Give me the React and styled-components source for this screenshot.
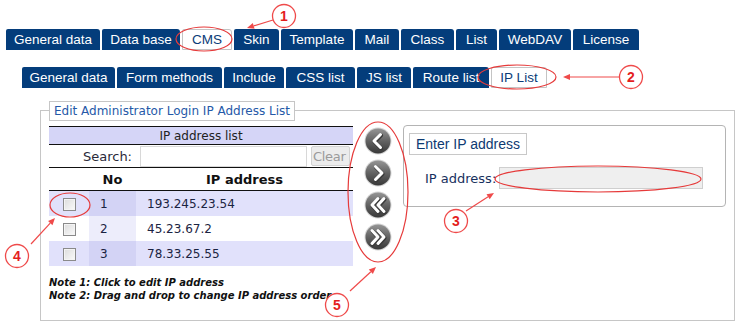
import React from "react";
import styled, { createGlobalStyle } from "styled-components";

const GlobalStyle = createGlobalStyle`
  html, body {
    margin: 0;
    padding: 0;
    background: #fff;
  }
  body {
    font-family: "Liberation Sans", Arial, sans-serif;
  }
`;

const Page = styled.div`
  position: relative;
  width: 743px;
  height: 328px;
  overflow: hidden;
  background: #fff;
`;

const TabRow = styled.div`
  display: flex;
  gap: 2px;
  padding-left: ${(p) => p.$indent}px;
  margin-top: ${(p) => p.$top}px;
  height: 21px;
`;

const Tab = styled.div`
  box-sizing: border-box;
  width: ${(p) => p.$w}px;
  height: 21px;
  display: flex;
  align-items: center;
  justify-content: center;
  font-family: "Liberation Sans", Arial, sans-serif;
  font-size: 13.5px;
  color: ${(p) => (p.$active ? "#0b3c78" : "#fff")};
  background: ${(p) => (p.$active ? "#fff" : "#043d7b")};
  border: ${(p) => (p.$active ? "1px solid #c4c4c4" : "none")};
  border-radius: 2px 3px 0 0;
`;

const Panel = styled.div`
  box-sizing: border-box;
  margin: 22px 8px 0 40px;
  height: 211px;
  border: 1px solid #c6c6c6;
  padding: 0 8px;
`;

const Legend = styled.div`
  width: fit-content;
  box-sizing: border-box;
  margin-top: -10px;
  height: 20px;
  line-height: 18px;
  padding: 0 4px;
  background: #fff;
  border: 1px solid #c6c6c6;
  font-family: "DejaVu Sans", Verdana, sans-serif;
  font-size: 12px;
  color: #2559a8;
`;

const Body = styled.div`
  display: flex;
  align-items: flex-start;
  margin-top: 5px;
`;

const LeftCol = styled.div`
  width: 304px;
`;

const Table = styled.table`
  width: 304px;
  border-collapse: collapse;
  font-family: "DejaVu Sans", Verdana, sans-serif;
  color: #1b2442;
  table-layout: fixed;
`;

const TitleCell = styled.td`
  background: #d5d5f7;
  border-top: 1px solid #111;
  border-bottom: 1px solid #111;
  height: 17px;
  padding: 0;
  text-align: center;
  font-size: 12px;
  color: #222;
`;

const SearchCell = styled.td`
  height: 22px;
  padding: 0 3px 0 0;
  border-bottom: 1px solid #111;
`;

const SearchBar = styled.div`
  display: flex;
  align-items: center;
  justify-content: flex-end;
  font-size: 13px;
  color: #2a2a3a;
`;

const SearchInput = styled.input`
  box-sizing: border-box;
  width: 167px;
  height: 21px;
  margin: 0 4px 0 8px;
  border: 1px solid #d8d8d8;
  background: #fff;
  padding: 0;
`;

const ClearButton = styled.button`
  box-sizing: border-box;
  width: 39px;
  height: 20px;
  padding: 0 0 0 1px;
  text-align: left;
  white-space: nowrap;
  overflow: hidden;
  border: 1px solid #d2d2d2;
  border-radius: 2px;
  background: #ececec;
  color: #9a9a9a;
  font-family: "DejaVu Sans", Verdana, sans-serif;
  font-size: 13px;
  letter-spacing: -0.3px;
`;

const Th = styled.th`
  height: 22px;
  padding: 0;
  border-bottom: 1px solid #111;
  font-size: 13px;
  font-weight: bold;
  color: #111;
  text-align: center;
`;

const Td = styled.td`
  height: 25px;
  padding: 0 0 0 ${(p) => p.$pad || 0}px;
  font-size: 12px;
  background: ${(p) => p.$bg};
  text-align: ${(p) => (p.$center ? "center" : "left")};
  vertical-align: middle;
`;

const Check = styled.span`
  display: inline-block;
  box-sizing: border-box;
  width: 13px;
  height: 13px;
  vertical-align: middle;
  border: 1px solid #8a8a8a;
  background: linear-gradient(135deg, #dcdcdc, #fafafa);
  box-shadow: inset 0 0 0 1px #f4f4f4;
`;

const Notes = styled.div`
  margin-top: 10px;
  font-family: "DejaVu Sans", Verdana, sans-serif;
  font-size: 10px;
  font-weight: bold;
  font-style: italic;
  line-height: 13px;
  color: #111;
`;

const ArrowCol = styled.div`
  display: flex;
  flex-direction: column;
  gap: 4px;
  margin: 1px 11px 0 11px;
`;

const RoundButton = styled.button`
  width: 28px;
  height: 28px;
  padding: 0;
  border: none;
  background: none;
  display: block;
`;

const EntryBox = styled.div`
  box-sizing: border-box;
  width: 323px;
  height: 82px;
  margin-top: -1px;
  border: 1px solid #b4b4b4;
  border-radius: 4px;
  padding: 7px 0 0 5px;
`;

const EntryTab = styled.div`
  box-sizing: border-box;
  display: inline-block;
  width: 118px;
  height: 22px;
  line-height: 20px;
  text-align: center;
  border: 1px solid #c8c8c8;
  font-family: "Liberation Sans", Arial, sans-serif;
  font-size: 14px;
  color: #0d3a72;
`;

const FieldRow = styled.div`
  display: flex;
  align-items: center;
  margin: 12px 0 0 16px;
  font-family: "DejaVu Sans", Verdana, sans-serif;
  font-size: 13px;
  color: #17305e;
`;

const FieldInput = styled.input`
  box-sizing: border-box;
  width: 204px;
  height: 22px;
  margin-left: 3px;
  border: 1px solid #cfcfcf;
  background: #efefef;
  padding: 0;
`;

const Overlay = styled.svg`
  position: absolute;
  left: 0;
  top: 0;
  pointer-events: none;
`;

const topTabs = [
  ["General data", 94],
  ["Data base", 78],
  ["CMS", 50, true],
  ["Skin", 45],
  ["Template", 72],
  ["Mail", 44],
  ["Class", 53],
  ["List", 41],
  ["WebDAV", 72],
  ["License", 66],
];

const subTabs = [
  ["General data", 93],
  ["Form methods", 105],
  ["Include", 60],
  ["CSS list", 69],
  ["JS list", 54],
  ["Route list", 76],
  ["IP List", 56, true],
];

const ips = ["193.245.23.54", "45.23.67.2", "78.33.25.55"];

const Chevron = ({ kind }) => {
  const shapes = {
    left: ["M16.5 7.5 L10 14 L16.5 20.5"],
    right: ["M11.5 7.5 L18 14 L11.5 20.5"],
    first: ["M14 7.5 L8 14 L14 20.5", "M20 7.5 L14 14 L20 20.5"],
    last: ["M8 7.5 L14 14 L8 20.5", "M14 7.5 L20 14 L14 20.5"],
  };
  const id = "g" + kind;
  return (
    <svg width="28" height="28" viewBox="0 0 28 28">
      <defs>
        <linearGradient id={id} x1="0" y1="0" x2="0" y2="1">
          <stop offset="0" stopColor="#959595" />
          <stop offset="0.5" stopColor="#626262" />
          <stop offset="1" stopColor="#383838" />
        </linearGradient>
      </defs>
      <circle cx="14" cy="14" r="13.5" fill="#d4d4d4" />
      <circle cx="14" cy="14" r="12.5" fill={`url(#${id})`} />
      {shapes[kind].map((d) => (
        <path key={d} d={d} fill="none" stroke="#3a3a3a" strokeWidth="4" strokeLinecap="round" strokeLinejoin="round" transform="translate(0.6 0.8)" />
      ))}
      {shapes[kind].map((d) => (
        <path key={d + "w"} d={d} fill="none" stroke="#fff" strokeWidth="3" strokeLinecap="round" strokeLinejoin="round" />
      ))}
    </svg>
  );
};

const Badge = ({ x, y, n }) => (
  <g>
    <circle cx={x} cy={y} r="11.5" fill="#fff" stroke="#ef4a4a" strokeWidth="1.3" />
    <text x={x} y={y + 5} textAnchor="middle" fontFamily="Liberation Sans, Arial, sans-serif" fontWeight="bold" fontSize="14" fill="#e41e1e">
      {n}
    </text>
  </g>
);

const Arrow = ({ x1, y1, x2, y2 }) => {
  const a = Math.atan2(y2 - y1, x2 - x1);
  const l = 7;
  const w = 3;
  const bx = x2 - l * Math.cos(a);
  const by = y2 - l * Math.sin(a);
  const px = -Math.sin(a) * w;
  const py = Math.cos(a) * w;
  return (
    <g>
      <line x1={x1} y1={y1} x2={bx} y2={by} stroke="#ef4a4a" strokeWidth="1.2" />
      <polygon points={`${x2},${y2} ${bx + px},${by + py} ${bx - px},${by - py}`} fill="#ef4a4a" />
    </g>
  );
};

const Ring = (props) => <ellipse fill="none" stroke="#e63a3a" strokeWidth="1.2" {...props} />;

const Annotations = () => (
  <Overlay width="743" height="328" viewBox="0 0 743 328">
    <Ring cx="204" cy="39" rx="28" ry="12" />
    <Ring cx="517" cy="77" rx="39" ry="12" />
    <Ring cx="598" cy="179" rx="103" ry="13" />
    <Ring cx="378" cy="192" rx="30" ry="70" />
    <Ring cx="70" cy="205" rx="20" ry="12" />
    <Arrow x1={273} y1={20} x2={247} y2={28} />
    <Arrow x1={619} y1={77} x2={563} y2={77} />
    <Arrow x1={466} y1={211} x2={494} y2={193} />
    <Arrow x1={31} y1={244} x2={55} y2={218} />
    <Arrow x1={350} y1={291} x2={376} y2={267} />
    <Badge x={284} y={16} n="1" />
    <Badge x={631} y={77} n="2" />
    <Badge x={456} y={221} n="3" />
    <Badge x={17} y={256} n="4" />
    <Badge x={337} y={305} n="5" />
  </Overlay>
);

const App = () => {
  return (
    <Page>
      <GlobalStyle />
      <TabRow $indent={6} $top={29}>
        {topTabs.map(([label, w, active]) => (
          <Tab key={label} $w={w} $active={active}>
            {label}
          </Tab>
        ))}
      </TabRow>
      <TabRow $indent={22} $top={17}>
        {subTabs.map(([label, w, active]) => (
          <Tab key={label} $w={w} $active={active}>
            {label}
          </Tab>
        ))}
      </TabRow>

      <Panel>
        <Legend>Edit Administrator Login IP Address List</Legend>
        <Body>
          <LeftCol>
            <Table>
              <colgroup>
                <col style={{ width: 40 }} />
                <col style={{ width: 47 }} />
                <col />
              </colgroup>
              <tbody>
                <tr>
                  <TitleCell colSpan={3}>IP address list</TitleCell>
                </tr>
                <tr>
                  <SearchCell colSpan={3}>
                    <SearchBar>
                      Search:
                      <SearchInput type="text" />
                      <ClearButton>Clear</ClearButton>
                    </SearchBar>
                  </SearchCell>
                </tr>
                <tr>
                  <Th />
                  <Th>No</Th>
                  <Th>IP address</Th>
                </tr>
                {ips.map((ip, i) => {
                  const odd = i % 2 === 0;
                  return (
                    <tr key={ip}>
                      <Td $center $bg={odd ? "#e1e1fb" : "#fff"}>
                        <Check />
                      </Td>
                      <Td $pad={11} $bg={odd ? "#d3d3f5" : "#ededfb"}>
                        {i + 1}
                      </Td>
                      <Td $pad={11} $bg={odd ? "#e1e1fb" : "#fff"}>
                        {ip}
                      </Td>
                    </tr>
                  );
                })}
              </tbody>
            </Table>
            <Notes>
              Note 1: Click to edit IP address
              <br />
              Note 2: Drag and drop to change IP address order
            </Notes>
          </LeftCol>

          <ArrowCol>
            {["left", "right", "first", "last"].map((k) => (
              <RoundButton key={k} aria-label={k}>
                <Chevron kind={k} />
              </RoundButton>
            ))}
          </ArrowCol>

          <EntryBox>
            <EntryTab>Enter IP address</EntryTab>
            <FieldRow>
              IP address:
              <FieldInput type="text" />
            </FieldRow>
          </EntryBox>
        </Body>
      </Panel>

      <Annotations />
    </Page>
  );
};

export default App;
